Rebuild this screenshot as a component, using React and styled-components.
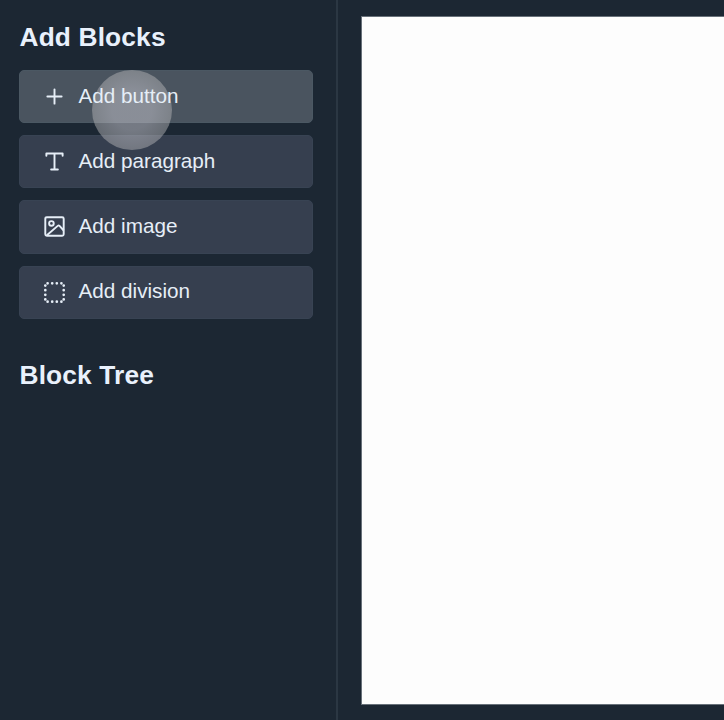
import React from "react";
import styled, { createGlobalStyle } from "styled-components";

const GlobalStyle = createGlobalStyle`
  * { box-sizing: border-box; }
  body {
    margin: 0;
    overflow: hidden;
    background: #1c2733;
    font-family: "Liberation Sans", Arial, sans-serif;
  }
`;

const Editor = styled.div`
  position: relative;
  display: flex;
  height: 720px;
  overflow: hidden;
`;

const Sidebar = styled.aside`
  flex: none;
  width: 338px;
  padding: 22px 24px 0 19px;
  border-right: 2px solid #2b3743;
`;

const Heading = styled.h2`
  margin: 0 0 0 0.5px;
  color: #e9f1fc;
  font-size: 26.3px;
  font-weight: 700;
  line-height: 30px;
  letter-spacing: 0.15px;
`;

const BlockList = styled.div`
  display: flex;
  flex-direction: column;
  gap: 12px;
  margin: 18px 0 41px;
`;

const BlockButton = styled.button`
  display: flex;
  align-items: center;
  gap: 12.5px;
  width: 294px;
  height: 53.2px;
  padding: 0 23px;
  border: 1px solid ${(p) => (p.$active ? "#4b5863" : "#384353")};
  border-radius: 5px;
  background: ${(p) => (p.$active ? "#4a545f" : "#363f4f")};
  color: #e6eef7;
  font: 20.7px "Liberation Sans", Arial, sans-serif;
`;

const Label = styled.span`
  position: relative;
  z-index: 1;
  padding-bottom: 1.4px;
`;

const Icon = styled.svg`
  flex: none;
  width: 23px;
  height: 23px;
  fill: none;
  stroke: currentColor;
  stroke-width: 1.25;
`;

const Canvas = styled.main`
  flex: 1;
  padding: 16px 0 15px 23px;
`;

const Page = styled.div`
  height: 100%;
  border: 1px solid #68717a;
  border-right: 0;
  background: #fdfdfd;
`;

const Pointer = styled.div`
  position: absolute;
  left: 92px;
  top: 70px;
  width: 80px;
  height: 80px;
  border-radius: 50%;
  background: radial-gradient(rgba(190, 190, 198, 0.55) 35%, rgba(180, 180, 182, 0.48) 70%);
`;

const PlusIcon = () => (
  <Icon viewBox="0 0 15 15" strokeLinecap="round">
    <path d="M7.5 2.85v9.3M2.85 7.5h9.3" />
  </Icon>
);

const TextIcon = () => (
  <Icon viewBox="0 0 15 15" strokeLinecap="round" strokeLinejoin="round">
    <path d="M2.2 3.8V2.3h10.6v1.5M7.5 2.3v10.4M5.3 12.7h4.4" />
  </Icon>
);

const ImageIcon = () => (
  <Icon viewBox="0 0 15 15">
    <rect x="1.5" y="1.5" width="12" height="12" rx="1" />
    <circle cx="5.5" cy="5.5" r="1.5" />
    <path d="M2.5 13.2L9.6 7.1q.6-.5 1.2 0l2.7 3" />
  </Icon>
);

const dotOffsets = [3, 6, 9, 12];

const DivisionIcon = () => (
  <Icon viewBox="0 0 15 15" strokeLinecap="round">
    {dotOffsets.map((n) => (
      <path
        key={n}
        strokeWidth="1.75"
        d={`M${n} 1.5h.01M${n} 13.5h.01M1.5 ${n}h.01M13.5 ${n}h.01`}
      />
    ))}
  </Icon>
);

const blocks = [
  { label: "Add button", Glyph: PlusIcon, active: true },
  { label: "Add paragraph", Glyph: TextIcon },
  { label: "Add image", Glyph: ImageIcon },
  { label: "Add division", Glyph: DivisionIcon },
];

export default function App() {
  return (
    <Editor>
      <GlobalStyle />
      <Sidebar>
        <Heading>Add Blocks</Heading>
        <BlockList>
          {blocks.map(({ label, Glyph, active }) => (
            <BlockButton key={label} $active={active}>
              <Glyph />
              <Label>{label}</Label>
            </BlockButton>
          ))}
        </BlockList>
        <Heading>Block Tree</Heading>
      </Sidebar>
      <Canvas>
        <Page />
      </Canvas>
      <Pointer />
    </Editor>
  );
}
